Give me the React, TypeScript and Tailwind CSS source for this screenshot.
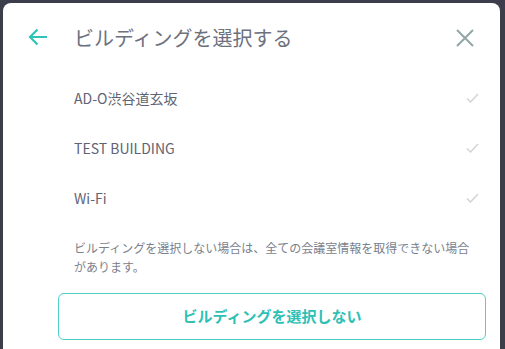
const buildings = ['AD-O渋谷道玄坂', 'TEST BUILDING', 'Wi-Fi'];

function CheckIcon() {
  return (
    <svg width="13" height="10" viewBox="0 0 13 10" fill="none">
      <path d="M1 5.5L4.5 9L12 1" stroke="#d2d4d6" strokeWidth="1.5" />
    </svg>
  );
}

export default function App() {
  return (
    <div
      className="h-[349px] w-[505px] overflow-hidden bg-[#3c3f4b] pl-[3px] pt-[3px]"
      style={{ fontFamily: "'Noto Sans CJK JP', sans-serif" }}
    >
      <div className="h-[400px] w-[497px] rounded-lg bg-white">
        <div className="flex h-[70px] items-center pl-[25px] pr-[26px]">
          <svg width="20" height="18" viewBox="0 0 20 18" fill="none" className="mt-[-2px]">
            <path d="M19 9H2M9.5 1.5L2 9l7.5 7.5" stroke="#2ec4b6" strokeWidth="2.2" />
          </svg>
          <h1 className="ml-[26px] flex-1 text-[20px] font-normal leading-[28px] text-[#6d717e]">
            ビルディングを選択する
          </h1>
          <svg width="18" height="18" viewBox="0 0 18 18" fill="none">
            <path d="M1 1l16 16M17 1L1 17" stroke="#93a6a6" strokeWidth="2" />
          </svg>
        </div>

        <ul className="pl-[71px] pr-[21px]">
          {buildings.map((name) => (
            <li key={name} className="flex h-[50px] items-center justify-between">
              <span className="text-[14px] leading-[22px] text-[#5f6374]">{name}</span>
              <CheckIcon />
            </li>
          ))}
        </ul>

        <p className="mt-[15px] w-[402px] pl-[71px] box-content text-[12px] leading-[19px] text-[#7b7f8c]">
          ビルディングを選択しない場合は、全ての会議室情報を取得できない場合があります。
        </p>

        <div className="pl-[55px] pr-[14px] pt-[17px]">
          <button className="h-[47px] w-full rounded-md border-[1.5px] border-[#4ccfc4] text-[15px] font-bold text-[#2fc0b5]">
            ビルディングを選択しない
          </button>
        </div>
      </div>
    </div>
  );
}
